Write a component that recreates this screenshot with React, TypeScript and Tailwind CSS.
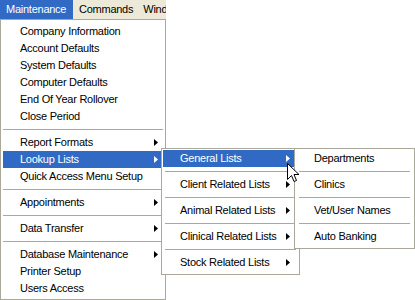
import React from "react";

const Arrow = ({ white = false }: { white?: boolean }) => (
  <svg width="4" height="7" viewBox="0 0 4 7" className="block">
    <path d="M0 0 L4 3.5 L0 7 Z" fill={white ? "#ffffff" : "#000000"} />
  </svg>
);

type Item = { label: string; sub?: boolean; active?: boolean } | "sep";

const MenuItem = ({ label, sub, active, indent, arrowRight }: { label: string; sub?: boolean; active?: boolean; indent: string; arrowRight: string }) => (
  <div
    className={`relative flex h-[17px] items-center whitespace-nowrap ${indent} ${active ? "bg-[#316ac5] text-white" : "text-black"}`}
  >
    <span className="leading-none">{label}</span>
    {sub && (
      <span className={`absolute top-[5px] ${arrowRight}`}>
        <Arrow white={active} />
      </span>
    )}
  </div>
);

const Sep = ({ mx }: { mx: string }) => (
  <div className={`py-[4px] ${mx}`}>
    <div className="h-px bg-[#aca899]" />
  </div>
);

const mainItems: Item[] = [
  { label: "Company Information" },
  { label: "Account Defaults" },
  { label: "System Defaults" },
  { label: "Computer Defaults" },
  { label: "End Of Year Rollover" },
  { label: "Close Period" },
  "sep",
  { label: "Report Formats", sub: true },
  { label: "Lookup Lists", sub: true, active: true },
  { label: "Quick Access Menu Setup" },
  "sep",
  { label: "Appointments", sub: true },
  "sep",
  { label: "Data Transfer", sub: true },
  "sep",
  { label: "Database Maintenance", sub: true },
  { label: "Printer Setup" },
  { label: "Users Access" },
];

const sub2: Item[] = [
  { label: "General Lists", sub: true, active: true },
  "sep",
  { label: "Client Related Lists", sub: true },
  "sep",
  { label: "Animal Related Lists", sub: true },
  "sep",
  { label: "Clinical Related Lists", sub: true },
  "sep",
  { label: "Stock Related Lists", sub: true },
];

const sub3: Item[] = [
  { label: "Departments" },
  "sep",
  { label: "Clinics" },
  "sep",
  { label: "Vet/User Names" },
  "sep",
  { label: "Auto Banking" },
];

export default function App() {
  return (
    <div
      className="relative h-[300px] w-[415px] overflow-hidden bg-white text-[11px] tracking-[-0.25px]"
      style={{ fontFamily: "Tahoma, 'Liberation Sans', Arial, sans-serif" }}
    >
      {/* menu bar */}
      <div className="flex h-[19px] w-[166px] items-center overflow-hidden whitespace-nowrap bg-[#ece9d8] text-black">
        <div className="flex h-full w-[73px] shrink-0 items-center bg-[#316ac5] pl-[6px] text-white">Maintenance</div>
        <div className="shrink-0 pl-[6px]">Commands</div>
        <div className="shrink-0 pl-[10px]">Wind</div>
      </div>

      {/* main menu */}
      <div className="absolute left-0 top-[19px] h-[281px] w-[166px] border border-[#aca899] bg-white px-[2px] pt-[3px]">
        {mainItems.map((it, i) =>
          it === "sep" ? (
            <Sep key={i} mx="mx-0" />
          ) : (
            <MenuItem key={i} {...it} indent="pl-[17px]" arrowRight="right-[5px]" />
          )
        )}
      </div>

      {/* submenu 2 */}
      <div className="absolute left-[161px] top-[148px] h-[127px] w-[139px] border border-[#aca899] bg-white px-[1px] pt-[1px]">
        {sub2.map((it, i) =>
          it === "sep" ? (
            <Sep key={i} mx="mx-[2px]" />
          ) : (
            <MenuItem key={i} {...it} indent="pl-[17px]" arrowRight="right-[8px]" />
          )
        )}
      </div>

      {/* submenu 3 */}
      <div className="absolute left-[294px] top-[148px] h-[101px] w-[121px] border border-[#aca899] bg-white px-[1px] pt-[1px]">
        {sub3.map((it, i) =>
          it === "sep" ? (
            <Sep key={i} mx="mx-[3px]" />
          ) : (
            <MenuItem key={i} {...it} indent="pl-[18px]" arrowRight="right-[8px]" />
          )
        )}
      </div>

      {/* cursor */}
      <svg className="absolute left-[287px] top-[163px]" width="13" height="20" viewBox="0 0 13 20">
        <path
          d="M0.5 0.5 L0.5 16.5 L4.5 12.5 L7 18.5 L9.5 17.5 L7 11.5 L12 11.5 Z"
          fill="#ffffff"
          stroke="#000000"
          strokeWidth="1"
          strokeLinejoin="miter"
        />
      </svg>
    </div>
  );
}
